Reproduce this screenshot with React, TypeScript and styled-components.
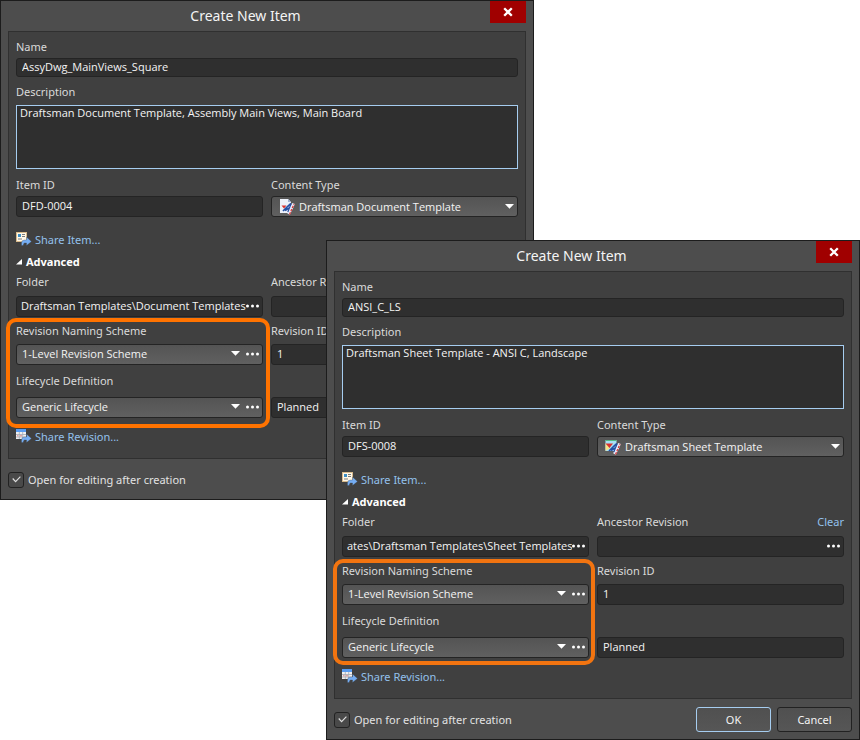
import React, { useId } from "react";
import styled, { createGlobalStyle } from "styled-components";

const GlobalStyle = createGlobalStyle`
  *, *::before, *::after { box-sizing: border-box; }
  body {
    margin: 0;
    background: #ffffff;
    color: #f4f4f4;
    font: 11px/16px "Noto Sans", "Open Sans", sans-serif;
  }
  button, input, select, textarea { font: inherit; color: inherit; }
  input, select, textarea { font-family: "Open Sans", "Noto Sans", sans-serif; }
`;

const Desktop = styled.main`
  display: grid;
  grid-template-columns: 326fr 208fr 326fr;
  align-items: start;
`;

const Window = styled.form<{ $front?: boolean }>`
  grid-row: 1;
  grid-column: ${(p) => (p.$front ? "2 / 4" : "1 / 3")};
  margin-top: ${(p) => (p.$front ? "240px" : "0")};
  z-index: ${(p) => (p.$front ? 1 : 0)};
  min-width: 0;
  padding: 0 7px 7px;
  border: 1px solid #1c1c1c;
  background: #4d4d4d;
`;

const TitleBar = styled.header`
  display: flex;
  align-items: flex-start;
  height: 30px;
  margin-left: -7px;
`;

const Title = styled.h1`
  flex: 1;
  margin: 0;
  font-size: 14px;
  line-height: 30px;
  font-weight: 400;
  text-align: center;
`;

const CloseButton = styled.button`
  display: grid;
  place-items: center;
  width: 36px;
  height: 22px;
  padding: 0;
  border: 0;
  background: #a00000;
`;

const Panel = styled.section`
  display: flex;
  flex-direction: column;
  padding: 7px 7px 13px;
  border: 1px solid #303030;
  background: #404040;
`;

const Columns = styled.div`
  display: grid;
  grid-template-columns: 1fr 1fr;
  column-gap: 8px;
`;

const Stack = styled.div`
  min-width: 0;
`;

const Field = styled.div<{ $gap: number; $after: number }>`
  display: flex;
  flex-direction: column;
  gap: ${(p) => p.$gap}px;
  margin-bottom: ${(p) => p.$after}px;
  min-width: 0;
`;

const LabelRow = styled.div`
  display: flex;
  justify-content: space-between;
  min-height: 16px;
`;

const Label = styled.label`
  color: #dadada;
  white-space: nowrap;
`;

const Link = styled.a`
  display: inline-flex;
  align-items: center;
  gap: 3px;
  color: #93c1ec;
  text-decoration: none;
`;

const ShareRow = styled.div<{ $after: number }>`
  display: flex;
  height: 16px;
  margin-bottom: ${(p) => p.$after}px;
`;

const Box = styled.div<{ $raised?: boolean; $low?: boolean; $icon?: boolean }>`
  display: flex;
  align-items: center;
  height: ${(p) => (p.$low ? 19 : 21)}px;
  padding: 0 3px ${(p) => (p.$icon ? 0 : 2)}px 0;
  border: 1px solid #242424;
  border-radius: 3px;
  background: ${(p) => (p.$raised ? "linear-gradient(#545454, #606060)" : "#2f2f2f")};
`;

const Text = styled.input<{ $more?: boolean }>`
  flex: 1;
  min-width: 0;
  height: 16px;
  padding: 0 0 0 ${(p) => (p.$more ? 4 : 5)}px;
  border: 0;
  outline: 0;
  background: transparent;
`;

const Picker = styled.select<{ $icon?: boolean }>`
  flex: 1;
  min-width: 0;
  height: 16px;
  padding: 0 0 0 ${(p) => (p.$icon ? 4 : 5)}px;
  border: 0;
  outline: 0;
  appearance: none;
  background: transparent;
`;

const IconSlot = styled.span`
  display: flex;
  margin-left: 7px;
`;

const Description = styled.textarea`
  display: block;
  height: 64px;
  padding: 0 3px;
  border: 1px solid #a6cdf0;
  border-radius: 0;
  outline: 0;
  resize: none;
  background: #2f2f2f;
  line-height: 14px;
`;

const MoreButton = styled.button<{ $spaced?: boolean }>`
  display: flex;
  align-items: center;
  height: 16px;
  margin-left: ${(p) => (p.$spaced ? 6 : 0)}px;
  padding: 0;
  border: 0;
  background: transparent;
`;

const Disclosure = styled.button`
  display: flex;
  align-items: center;
  align-self: flex-start;
  gap: 4px;
  height: 16px;
  margin-bottom: 4px;
  padding: 0;
  border: 0;
  background: transparent;
  color: #ffffff;
  font-weight: 700;
`;

const Highlight = styled.div<{ $front?: boolean }>`
  position: relative;
  &::after {
    content: "";
    position: absolute;
    inset: ${(p) => (p.$front ? "-4px -6px -7px -9px" : "-5px -7px -10px -10px")};
    border: 4px solid ${(p) => (p.$front ? "#f27410" : "#ff7300")};
    border-radius: 10px;
    pointer-events: none;
  }
`;

const Footer = styled.footer`
  display: flex;
  align-items: center;
  gap: 6px;
  min-height: 25px;
  margin-top: 8px;
`;

const CheckLabel = styled.label`
  display: flex;
  align-items: center;
  gap: 4px;
  margin-right: auto;
  color: #e2e2e2;
`;

const CheckCell = styled.span`
  display: grid;
  place-items: center;
  & > * { grid-area: 1 / 1; }
  & > svg { pointer-events: none; visibility: hidden; }
  & > input:checked + svg { visibility: visible; }
`;

const CheckInput = styled.input`
  appearance: none;
  width: 16px;
  height: 16px;
  margin: 0;
  border: 1px solid #222222;
  border-radius: 3px;
  background: #494949;
`;

const ActionButton = styled.button<{ $primary?: boolean }>`
  width: 75px;
  height: 25px;
  padding: 0;
  border: 1px solid ${(p) => (p.$primary ? "#a6cdf0" : "#222222")};
  border-radius: 3px;
  background: linear-gradient(#505050, #565656);
`;

const Dots = () => (
  <svg width="13" height="4" viewBox="0 0 13 4" fill="#fff" aria-hidden="true">
    <circle cx="1.500" cy="2" r="1.500" />
    <circle cx="6.500" cy="2" r="1.500" />
    <circle cx="11.500" cy="2" r="1.500" />
  </svg>
);

const Arrow = () => (
  <svg width="9" height="5" viewBox="0 0 9 5" fill="#fff" aria-hidden="true">
    <path d="M0 0h9L4.500 4.800z" />
  </svg>
);

const CrossIcon = () => (
  <svg width="10" height="10" viewBox="0 0 10 10" stroke="#fff" strokeWidth="2.300" aria-hidden="true">
    <path d="M1.200 1.200l7.600 7.600M8.800 1.200L1.200 8.800" />
  </svg>
);

const shareArrow = "M5.500 13.500V11Q5.500 8 8.500 8H10.500V5L15.500 9.500L10.500 13.500V11H8.500Q7.500 11 7.200 13.500z";

const ShareItemIcon = () => (
  <svg width="16" height="16" viewBox="0 0 16 16" aria-hidden="true">
    <rect x="0.500" y="0.500" width="10" height="9" fill="#fff8e8" stroke="#d9bb8c" />
    <rect x="2" y="2" width="3" height="3" fill="#3f8fc4" />
    <path d="M6 2.500h3M6 4.500h3M2 7h4" stroke="#7c7c7c" />
    <path d={shareArrow} fill="#75adf3" stroke="#404040" strokeWidth="0.300" />
  </svg>
);

const ShareRevisionIcon = () => (
  <svg width="16" height="16" viewBox="0 0 16 16" aria-hidden="true">
    <rect width="10" height="10" fill="#f0f0f0" />
    <rect width="10" height="3" fill="#5a9cf0" />
    <path d="M0 5.500h10M0 8h10M3.300 3v7M6.700 3v7" stroke="#a3a9b5" strokeWidth="0.800" />
    <path d="M4 6.800h2M1 6.800h1.500" stroke="#d78484" />
    <path d={shareArrow} fill="#75adf3" stroke="#404040" strokeWidth="0.300" />
  </svg>
);

const pens = (
  <>
    <path d="M4 12L8.500 7.500L12 4.500M6 11.500L10 9" stroke="#2350a5" strokeWidth="1.700" fill="none" />
    <path d="M9.500 15L12 10L14.500 4.500" stroke="#e8eefc" strokeWidth="3" fill="none" />
    <path d="M8.800 13L12 5" stroke="#284da0" strokeWidth="1.200" fill="none" />
    <path d="M10.500 15.500L15 5" stroke="#d93a3a" strokeWidth="1.300" fill="none" strokeDasharray="2.500 1" />
  </>
);

const DocumentIcon = () => (
  <svg width="16" height="16" viewBox="0 0 16 16" aria-hidden="true">
    <path d="M1 0h8l3 3v11H1z" fill="#edf1fa" />
    <path d="M9 0l3 3H9z" fill="#9fb0d0" />
    <path d="M2.500 6.500h5L5 9.500z" fill="#d8322e" />
    {pens}
  </svg>
);

const SheetIcon = () => (
  <svg width="16" height="16" viewBox="0 0 16 16" aria-hidden="true">
    <rect x="0.500" y="1" width="11" height="11" fill="#a7e0f5" />
    <path d="M0.500 1.500h11" stroke="#55b783" />
    <path d="M0.500 4l5 5L0.500 12z" fill="#f4e58a" />
    <path d="M0.500 4.500h7.500L4.500 9z" fill="#d8322e" />
    {pens}
  </svg>
);

const CheckIcon = () => (
  <svg width="9" height="7" viewBox="0 0 9 7" fill="none" stroke="#dedede" strokeWidth="1.200" aria-hidden="true">
    <path d="M0.700 2.500L3.600 5.600L8.400 0.700" />
  </svg>
);

const DisclosureIcon = () => (
  <svg width="6" height="6" viewBox="0 0 6 6" fill="#fff" aria-hidden="true">
    <path d="M6 0v5.500H0z" />
  </svg>
);

type TextFieldProps = {
  label?: string;
  name?: string;
  value: string;
  gap: number;
  after: number;
  low?: boolean;
  more?: boolean;
  clearable?: boolean;
};

function TextField({ label, name, value, gap, after, low, more, clearable }: TextFieldProps) {
  const id = useId();
  return (
    <Field $gap={gap} $after={after}>
      <LabelRow>
        {label && <Label htmlFor={id}>{label}</Label>}
        {clearable && <Link href="#clear">Clear</Link>}
      </LabelRow>
      <Box $low={low}>
        <Text id={id} $more={more} defaultValue={value} aria-label={label ? undefined : name} />
        {more && <MoreButton type="button" aria-label="Browse"><Dots /></MoreButton>}
      </Box>
    </Field>
  );
}

type PickFieldProps = {
  label: string;
  value: string;
  gap: number;
  after: number;
  icon?: React.ReactNode;
  more?: boolean;
};

function PickField({ label, value, gap, after, icon, more }: PickFieldProps) {
  const id = useId();
  return (
    <Field $gap={gap} $after={after}>
      <Label htmlFor={id}>{label}</Label>
      <Box $raised $icon={!!icon}>
        {icon && <IconSlot>{icon}</IconSlot>}
        <Picker id={id} $icon={!!icon} defaultValue={value}>
          <option>{value}</option>
        </Picker>
        <Arrow />
        {more && <MoreButton $spaced type="button" aria-label="Browse"><Dots /></MoreButton>}
      </Box>
    </Field>
  );
}

type Item = {
  name: string;
  description: string;
  itemId: string;
  contentType: string;
  icon: React.ReactNode;
  folder: string;
};

function CreateItemWindow({ item, front }: { item: Item; front?: boolean }) {
  const descriptionId = useId();
  return (
    <Window $front={front} onSubmit={(e) => e.preventDefault()}>
      <TitleBar>
        <Title>Create New Item</Title>
        <CloseButton type="button" aria-label="Close"><CrossIcon /></CloseButton>
      </TitleBar>
      <Panel>
        <TextField label="Name" value={item.name} gap={3} after={7} low />
        <Field $gap={5} $after={8}>
          <Label htmlFor={descriptionId}>Description</Label>
          <Description id={descriptionId} defaultValue={item.description} spellCheck={false} />
        </Field>
        <Columns>
          <TextField label="Item ID" value={item.itemId} gap={3} after={15} />
          <PickField label="Content Type" value={item.contentType} icon={item.icon} gap={3} after={15} />
        </Columns>
        <ShareRow $after={6}>
          <Link href="#share-item"><ShareItemIcon />Share Item...</Link>
        </ShareRow>
        <Disclosure type="button" aria-expanded="true"><DisclosureIcon />Advanced</Disclosure>
        <Columns>
          <Stack>
            <TextField label="Folder" value={item.folder} gap={6} after={6} more />
            <Highlight $front={front}>
              <PickField label="Revision Naming Scheme" value="1-Level Revision Scheme" gap={5} after={8} more />
              <PickField label="Lifecycle Definition" value="Generic Lifecycle" gap={8} after={0} more />
            </Highlight>
          </Stack>
          <Stack>
            <TextField label="Ancestor Revision" value="" gap={6} after={6} more clearable={front} />
            <TextField label="Revision ID" value="1" gap={5} after={8} />
            <TextField name="Lifecycle State" value="Planned" gap={8} after={11} />
          </Stack>
        </Columns>
        <ShareRow $after={0}>
          <Link href="#share-revision"><ShareRevisionIcon />Share Revision...</Link>
        </ShareRow>
      </Panel>
      <Footer>
        <CheckLabel>
          <CheckCell><CheckInput type="checkbox" defaultChecked /><CheckIcon /></CheckCell>
          Open for editing after creation
        </CheckLabel>
        {front && (
          <>
            <ActionButton $primary type="submit">OK</ActionButton>
            <ActionButton type="button">Cancel</ActionButton>
          </>
        )}
      </Footer>
    </Window>
  );
}

const documentItem: Item = {
  name: "AssyDwg_MainViews_Square",
  description: "Draftsman Document Template, Assembly Main Views, Main Board",
  itemId: "DFD-0004",
  contentType: "Draftsman Document Template",
  icon: <DocumentIcon />,
  folder: "Draftsman Templates\\Document Templates",
};

const sheetItem: Item = {
  name: "ANSI_C_LS",
  description: "Draftsman Sheet Template - ANSI C, Landscape",
  itemId: "DFS-0008",
  contentType: "Draftsman Sheet Template",
  icon: <SheetIcon />,
  folder: "ates\\Draftsman Templates\\Sheet Templates",
};

export default function App() {
  return (
    <>
      <GlobalStyle />
      <Desktop>
        <CreateItemWindow item={documentItem} />
        <CreateItemWindow item={sheetItem} front />
      </Desktop>
    </>
  );
}
